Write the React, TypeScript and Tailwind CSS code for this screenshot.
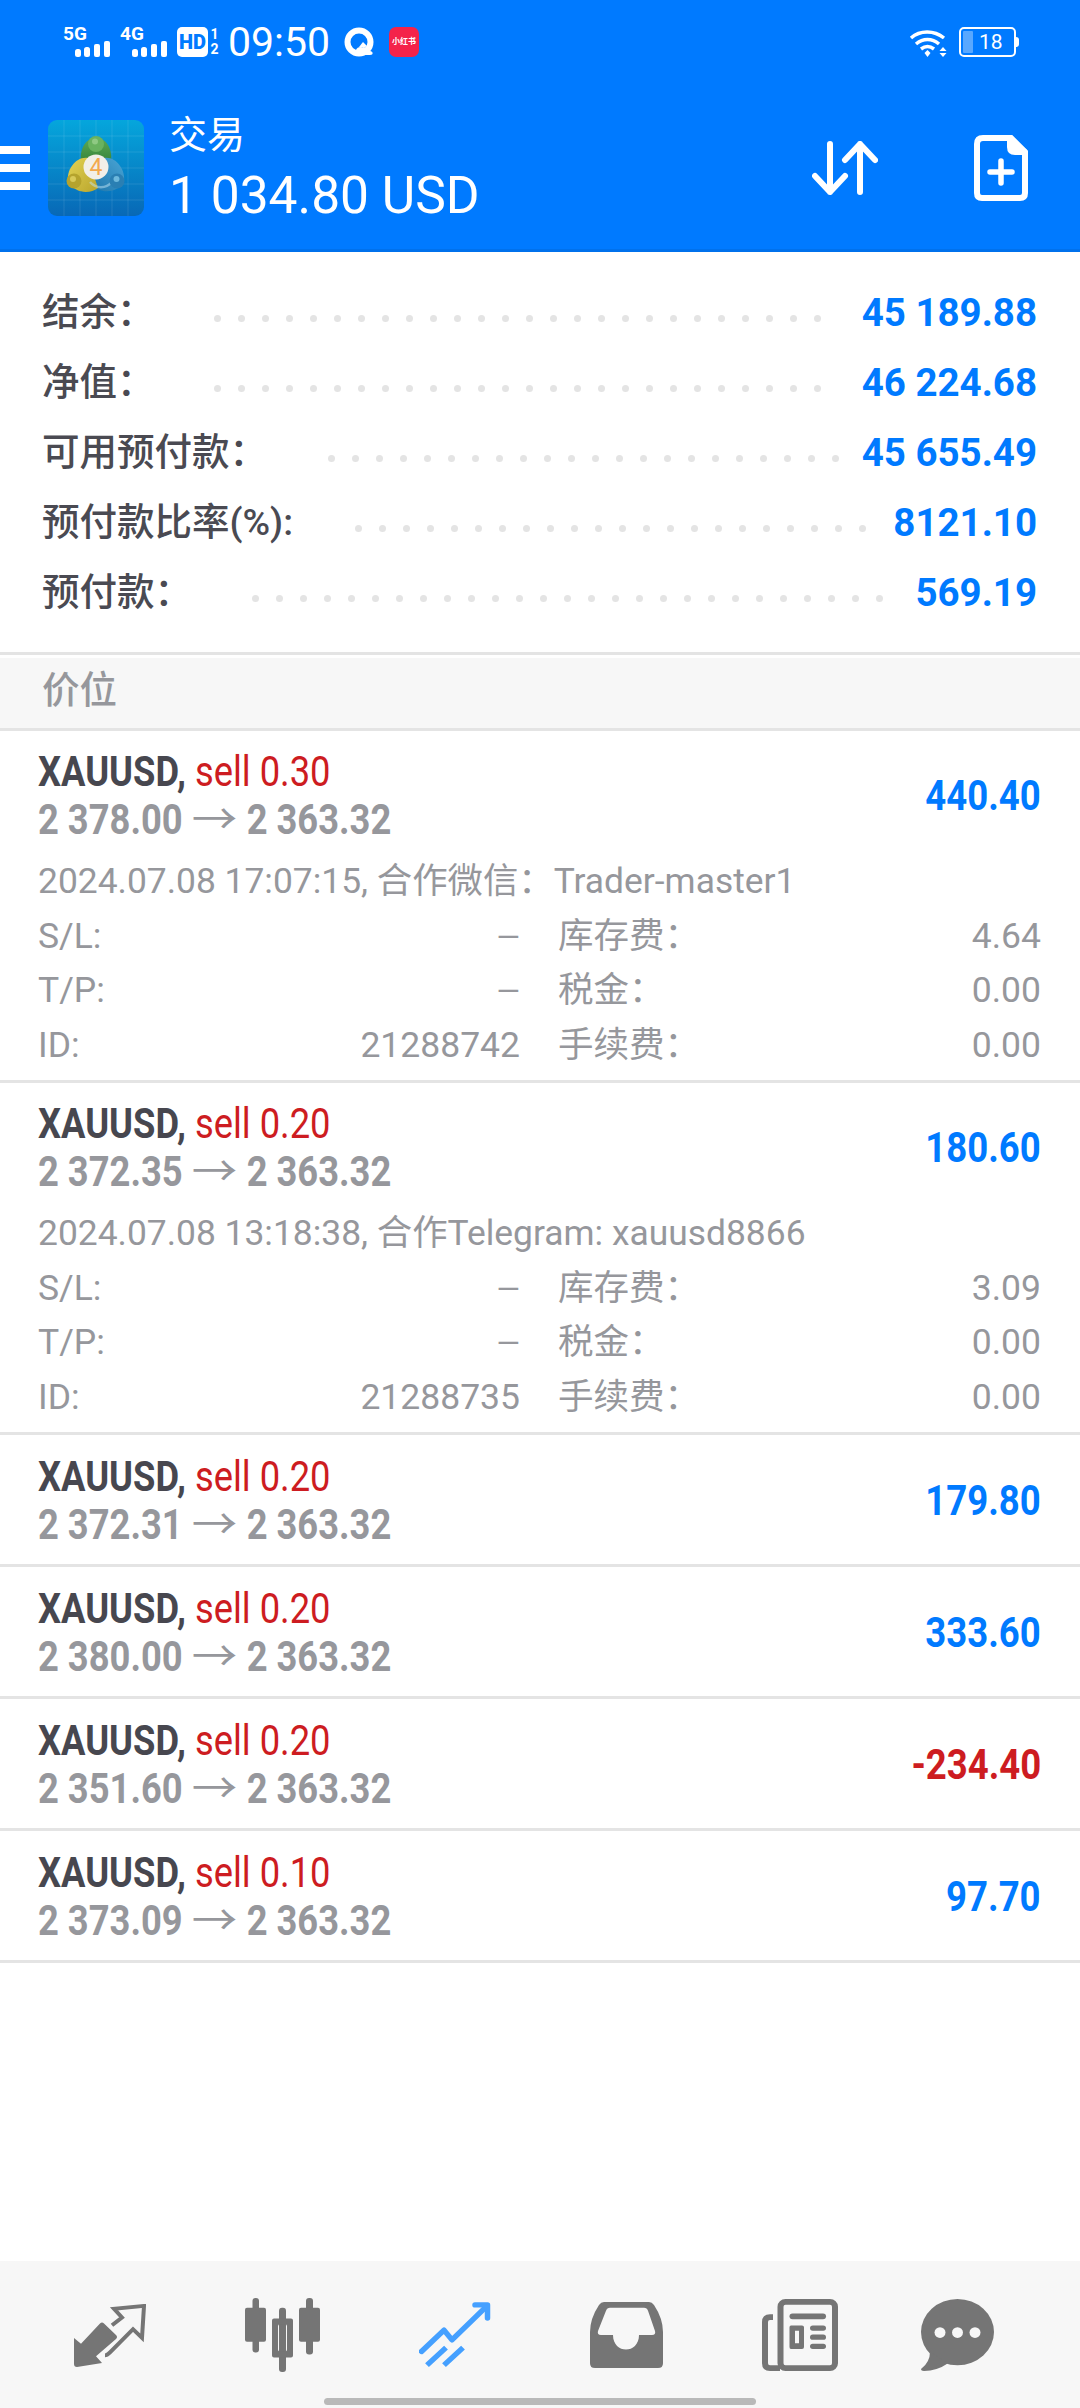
import React from "react";

const balances = [
  { label: "结余：", value: "45 189.88", labelBox: "w-[172px]", dots: 26 },
  { label: "净值：", value: "46 224.68", labelBox: "w-[172px]", dots: 26 },
  { label: "可用预付款：", value: "45 655.49", labelBox: "w-[286px]", dots: 22 },
  { label: "预付款比率(%):", value: "8121.10", labelBox: "w-[313px]", dots: 22 },
  { label: "预付款：", value: "569.19", labelBox: "w-[210px]", dots: 27 },
];

const positions = [
  {
    lot: "0.30",
    open: "2 378.00",
    profit: "440.40",
    details: {
      note: "2024.07.08 17:07:15, 合作微信：Trader-master1",
      id: "21288742",
      swap: "4.64",
    },
  },
  {
    lot: "0.20",
    open: "2 372.35",
    profit: "180.60",
    details: {
      note: "2024.07.08 13:18:38, 合作Telegram: xauusd8866",
      id: "21288735",
      swap: "3.09",
    },
  },
  { lot: "0.20", open: "2 372.31", profit: "179.80" },
  { lot: "0.20", open: "2 380.00", profit: "333.60" },
  { lot: "0.20", open: "2 351.60", profit: "-234.40" },
  { lot: "0.10", open: "2 373.09", profit: "97.70" },
];

const Signal = ({ label }: { label: string }) => (
  <div className="flex h-[30px] w-[47px] flex-col">
    <span className="h-[14px] text-[19px] font-bold leading-[14px]">{label}</span>
    <svg className="-mt-[1px]" width="47" height="17" viewBox="0 0 47 17">
      <rect x="12" y="9" width="6" height="8" rx="2.500" fill="#fff" />
      <rect x="21" y="7" width="6" height="10" rx="2.500" fill="#fff" />
      <rect x="31" y="4" width="6" height="13" rx="2" fill="#fff" />
      <rect x="41" y="1" width="6" height="16" rx="2" fill="#fff" />
    </svg>
  </div>
);

const WeatherIcon = () => (
  <svg width="30" height="30" viewBox="0 0 30 30">
    <circle cx="15" cy="15" r="11.500" fill="none" stroke="#fff" strokeWidth="6" />
    <path d="M13 28c-3 0-4-4-1-5 1-3 5-4 7-2 3-2 7 0 7 3 3 0 4 4 0 4z" fill="#fff" />
    <path d="M15 20l4-5 4 4-3 2z" fill="#fff" />
  </svg>
);

const WifiIcon = () => (
  <svg width="38" height="28" viewBox="0 0 38 28">
    <path d="M2 9C11 1 25 1 35 9" fill="none" stroke="#fff" strokeWidth="3.500" />
    <path d="M7 15c7-6 16-6 23 0" fill="none" stroke="#fff" strokeWidth="3.500" />
    <path d="M12 20c4-3 9-3 13 0" fill="none" stroke="#fff" strokeWidth="3.500" />
    <path d="M15.500 24l3-3 3 3-3 4z" fill="#fff" />
    <path d="M34 18l3.500 4h-7zM34 28l3.500-4h-7z" fill="#fff" />
  </svg>
);

const Battery = () => (
  <div className="flex items-center">
    <div className="flex h-[30px] w-[57px] items-center rounded-[5px] border-2 border-white p-[2px]">
      <div className="h-full w-[10px] rounded-[1px] bg-white/35" />
      <span className="ml-[6px] text-[21px] leading-none text-white">18</span>
    </div>
    <div className="h-[10px] w-[3px] rounded-r-sm bg-white" />
  </div>
);

const StatusBar = () => (
  <div className="flex h-[30px] items-end pl-[63px] pr-[61px] text-white">
    <Signal label="5G" />
    <div className="ml-[10px]">
      <Signal label="4G" />
    </div>
    <div className="ml-[10px] flex h-[30px] w-[31px] items-center justify-center rounded-[5px] bg-white text-[20px] font-black leading-none text-[#007aff]">
      HD
    </div>
    <div className="ml-px flex w-[11px] flex-col items-center text-[14px] font-bold leading-[15px]">
      <span>1</span>
      <span>2</span>
    </div>
    <span className="ml-[8px] text-[41px] leading-[30px]">09:50</span>
    <div className="ml-[14px]">
      <WeatherIcon />
    </div>
    <div className="ml-[15px] flex h-[30px] w-[30px] items-center justify-center rounded-[7px] bg-[#f4234a] text-[8px] font-bold leading-none whitespace-nowrap">
      小红书
    </div>
    <div className="ml-auto mr-[12px]">
      <WifiIcon />
    </div>
    <Battery />
  </div>
);

const MetaTraderLogo = () => (
  <svg width="96" height="96" viewBox="0 0 96 96">
    <defs>
      <linearGradient id="tile" x1="0" y1="0" x2="0" y2="1">
        <stop offset="0" stopColor="#05a6dc" />
        <stop offset="1" stopColor="#0868b6" />
      </linearGradient>
      <linearGradient id="green" x1="0" y1="0" x2="0" y2="1">
        <stop offset="0" stopColor="#5ea955" />
        <stop offset="1" stopColor="#2f7f36" />
      </linearGradient>
      <linearGradient id="yellow" x1="0" y1="0" x2="1" y2="1">
        <stop offset="0" stopColor="#e3d354" />
        <stop offset="1" stopColor="#b9a52c" />
      </linearGradient>
      <linearGradient id="blue" x1="1" y1="0" x2="0" y2="1">
        <stop offset="0" stopColor="#4ba6d6" />
        <stop offset="1" stopColor="#1c74aa" />
      </linearGradient>
    </defs>
    <rect width="96" height="96" rx="9" fill="url(#tile)" />
    <path
      d="M16 0V96M32 0V96M48 0V96M64 0V96M80 0V96M0 16H96M0 32H96M0 48H96M0 64H96M0 80H96"
      stroke="#fff"
      strokeOpacity="0.1"
      strokeWidth="1"
    />
    <path d="M48 17C60 19 66 32 62 46L34 46C30 32 36 19 48 17Z" fill="url(#green)" />
    <path d="M56 38C68 36 78 50 76 62C68 74 52 74 42 64L52 50Z" fill="url(#blue)" />
    <path d="M40 38C28 36 18 50 20 62C28 74 42 74 50 68L44 50Z" fill="url(#yellow)" />
    <path d="M42 62C48 69 58 69 64 62" fill="none" stroke="#bfe3f3" strokeOpacity="0.5" strokeWidth="2.500" />
    <circle cx="48" cy="24" r="8" fill="#69b25f" />
    <circle cx="47" cy="21.500" r="3" fill="#8fc983" />
    <circle cx="26" cy="61" r="7.500" fill="#b5a32d" />
    <circle cx="25" cy="59" r="3" fill="#d8c958" />
    <circle cx="69" cy="61" r="7.500" fill="#2a7fb3" />
    <circle cx="68.500" cy="59" r="3" fill="#6db8dc" />
    <circle cx="48" cy="47" r="12.500" fill="#f2efe8" />
    <text x="48" y="55" textAnchor="middle" fontSize="23" fontFamily="Roboto" fill="#f3a94d">
      4
    </text>
  </svg>
);

const SortIcon = () => (
  <svg width="66" height="54" viewBox="0 0 66 54" fill="none" stroke="#fff" strokeWidth="6" strokeLinecap="round" strokeLinejoin="round">
    <path d="M18 3V51M3 35L18 51L33 35" />
    <path d="M48 51V3M33 19L48 3L63 19" />
  </svg>
);

const NewFileIcon = () => (
  <svg width="54" height="66" viewBox="0 0 54 66" fill="none">
    <path d="M9 3H37L51 17V58Q51 63 46 63H8Q3 63 3 58V9Q3 3 9 3Z" stroke="#fff" strokeWidth="6" />
    <path d="M33 2V12Q33 20 41 20H53V15L38 2Z" fill="#fff" />
    <path d="M16 37H38M27 26V48" stroke="#fff" strokeWidth="5.500" strokeLinecap="round" />
  </svg>
);

const Header = () => (
  <header className="h-[252px] border-b-[3px] border-[#0071ec] bg-[#007aff] pt-[27px]">
    <StatusBar />
    <div className="mt-[63px] flex h-[96px] items-center">
      <div className="flex w-[30px] flex-col gap-[10px]">
        <div className="h-[8px] bg-white" />
        <div className="h-[8px] bg-white" />
        <div className="h-[8px] bg-white" />
      </div>
      <div className="ml-[18px]">
        <MetaTraderLogo />
      </div>
      <div className="ml-[25px] mt-[15px] flex flex-col text-white">
        <span className="h-[41px] text-[38px] leading-[40px]">交易</span>
        <span className="h-[80px] text-[51.500px] leading-[80px]">1 034.80 USD</span>
      </div>
      <div className="ml-auto mr-[52px] flex items-center gap-[96px]">
        <SortIcon />
        <NewFileIcon />
      </div>
    </div>
  </header>
);

const Balances = () => (
  <section className="border-b-[3px] border-[#e4e4e4] pb-[25px] pl-[42px] pr-[43px] pt-[25px]">
    {balances.map((row) => (
      <div key={row.label} className="flex h-[70px] items-center">
        <span className={`${row.labelBox} shrink-0 pt-[2px] text-[37.500px] font-medium leading-none text-[#4a4a52]`}>{row.label}</span>
        <div className="mt-[12px] flex gap-[17px]">
          {Array.from({ length: row.dots }).map((_, i) => (
            <span key={i} className="h-[7px] w-[7px] rounded-full bg-[#e4e4e4]" />
          ))}
        </div>
        <span className="ml-auto pt-[2px] text-[38.500px] font-bold leading-none text-[#007aff]">{row.value}</span>
      </div>
    ))}
  </section>
);

const PriceHeading = () => (
  <div className="mt-[3px] flex h-[73px] items-center border-b-[3px] border-[#e4e4e4] bg-[#f7f7f7] pb-[5px] pl-[42px] text-[37.500px] font-medium text-[#96979c]">
    价位
  </div>
);

const DetailRow = ({ a, b, c, d }: { a: string; b: string; c: string; d: string }) => (
  <div className="flex h-[54.500px] items-center pl-[38px] pr-[39px] text-[35.500px] text-[#96979c]">
    <div className="flex w-[482px] items-center justify-between">
      <span>{a}</span>
      <span className={b === "—" ? "text-[30px]" : ""}>{b}</span>
    </div>
    <div className="ml-[38px] flex flex-1 justify-between">
      <span>{c}</span>
      <span>{d}</span>
    </div>
  </div>
);

const PositionRow = ({ item }: { item: (typeof positions)[number] }) => (
  <article className={`border-b-[3px] border-[#e4e4e4] ${item.details ? "h-[352px] pt-[17px]" : "h-[132px] pt-[18px]"}`}>
    <div className="flex items-center pl-[38px] pr-[39px]">
      <div className="flex-1 text-[42px] leading-[48px] whitespace-nowrap">
        <div className="origin-left scale-x-[0.865] text-[#47474f]">
          <span className="font-bold">XAUUSD,</span> <span className="text-[#cd1c21]">sell {item.lot}</span>
        </div>
        <div className="origin-left scale-x-[0.865] font-bold text-[#96979c]">
          {item.open}
          <span className="mx-[16px] inline-block scale-x-[1.25] font-normal">→</span>
          2 363.32
        </div>
      </div>
      <span
        className={`origin-right scale-x-[0.87] text-[42px] font-bold leading-none ${
          item.profit.startsWith("-") ? "text-[#cd1c21]" : "text-[#007aff]"
        }`}
      >
        {item.profit}
      </span>
    </div>
    {item.details && (
      <div className="mt-[11px]">
        <div className="flex h-[54px] items-center pl-[38px] text-[35.400px] text-[#96979c]">{item.details.note}</div>
        <DetailRow a="S/L:" b="—" c="库存费：" d={item.details.swap} />
        <DetailRow a="T/P:" b="—" c="税金：" d="0.00" />
        <DetailRow a="ID:" b={item.details.id} c="手续费：" d="0.00" />
      </div>
    )}
  </article>
);

const NavTrade = () => (
  <svg width="72" height="63" viewBox="0 0 72 65" preserveAspectRatio="none">
    <path d="M0 35L7 41L26 20Q28 18 30 20L42 32Q44 34 42 36L22 54L28 61L3 65Q0 65 0 62Z" fill="#757575" />
    <path d="M38 22L48 14L40 5L70 2L68 35L59 26L36 50Q33 53 31 53" fill="none" stroke="#757575" strokeWidth="4" />
  </svg>
);

const NavQuotes = () => (
  <svg width="75" height="74" viewBox="0 0 75 76" preserveAspectRatio="none" fill="#757575">
    <rect x="7.500" y="0" width="6.500" height="56" rx="3" />
    <rect x="0" y="10" width="21" height="35" rx="2" />
    <rect x="34" y="10" width="7" height="66" rx="3" />
    <path fillRule="evenodd" d="M29 21H46Q48 21 48 23V59Q48 61 46 61H29Q27 61 27 59V23Q27 21 29 21ZM35 27Q33 27 33 29V53Q33 55 35 55H40Q42 55 42 53V29Q42 27 40 27Z" />
    <rect x="61" y="0" width="7" height="58" rx="3" />
    <rect x="54" y="10" width="21" height="35" rx="2" />
  </svg>
);

const NavChart = () => (
  <svg width="72" height="66" viewBox="0 0 72 68" preserveAspectRatio="none" fill="none" stroke="#45a0ff" strokeWidth="5.500" strokeLinecap="round" strokeLinejoin="round">
    <path d="M2.500 51L25 29L33 39L67 5" />
    <path d="M56 3H68.500V16.500" />
    <path d="M8 65L27 47M25 65L44 47" strokeLinecap="butt" />
  </svg>
);

const NavInbox = () => (
  <svg width="73" height="66" viewBox="0 0 73 68" preserveAspectRatio="none">
    <path
      fill="#757575"
      fillRule="evenodd"
      d="M14 0H59Q62 0 64 3Q73 17 73 31V63Q73 68 68 68H5Q0 68 0 63V31Q0 17 9 3Q11 0 14 0ZM20 6Q17 6 16 9L8 30Q7 34 11 34H23C23 54 49 54 49 34H62Q66 34 65 30L58 9Q57 6 54 6Z"
    />
  </svg>
);

const NavNews = () => (
  <svg width="76" height="72" viewBox="0 0 76 75" preserveAspectRatio="none">
    <g fill="none" stroke="#757575" strokeWidth="6">
      <rect x="18.500" y="3" width="54.500" height="69" rx="5" />
      <path d="M11 19H8Q3 19 3 24V67Q3 72 8 72H18" />
    </g>
    <g fill="#757575">
      <rect x="27.500" y="15" width="36.500" height="6" rx="3" />
      <path fillRule="evenodd" d="M29 27.500H40Q42 27.500 42 29.500V50Q42 52 40 52H29Q27.500 52 27.500 50V29.500Q27.500 27.500 29 27.500ZM33 33V46H37V33Z" />
      <rect x="48" y="27.500" width="16" height="5.500" rx="2.750" />
      <rect x="48" y="37" width="16" height="5.500" rx="2.750" />
      <rect x="48" y="46.500" width="16" height="5.500" rx="2.750" />
    </g>
  </svg>
);

const NavChat = () => (
  <svg width="73" height="72" viewBox="0 0 73 75" preserveAspectRatio="none">
    <ellipse cx="36.500" cy="34.500" rx="36.500" ry="34.500" fill="#757575" />
    <path d="M9 55Q9 66 0 73Q0 75 3 75Q16 75 27 67Z" fill="#757575" />
    <circle cx="19" cy="35" r="5.500" fill="#f7f7f7" />
    <circle cx="36.500" cy="35" r="5.500" fill="#f7f7f7" />
    <circle cx="54" cy="35" r="5.500" fill="#f7f7f7" />
  </svg>
);

const BottomNav = () => (
  <nav className="relative h-[147px] shrink-0 bg-[#f7f7f7]">
    <div className="flex h-[76px] translate-y-[36px] items-center gap-[99px] pl-[74px]">
      <NavTrade />
      <NavQuotes />
      <NavChart />
      <NavInbox />
      <NavNews />
      <div className="-ml-[16px]">
        <NavChat />
      </div>
    </div>
    <div className="absolute bottom-[3px] left-[324px] h-[7px] w-[432px] rounded-full bg-[#b9b9b9]" />
  </nav>
);

export default function App() {
  return (
    <div className="flex h-[2408px] w-[1080px] flex-col overflow-hidden bg-white font-['Roboto','Noto_Sans_CJK_SC',sans-serif]">
      <Header />
      <Balances />
      <PriceHeading />
      <main className="flex-1">
        {positions.map((item, i) => (
          <PositionRow key={i} item={item} />
        ))}
      </main>
      <BottomNav />
    </div>
  );
}
